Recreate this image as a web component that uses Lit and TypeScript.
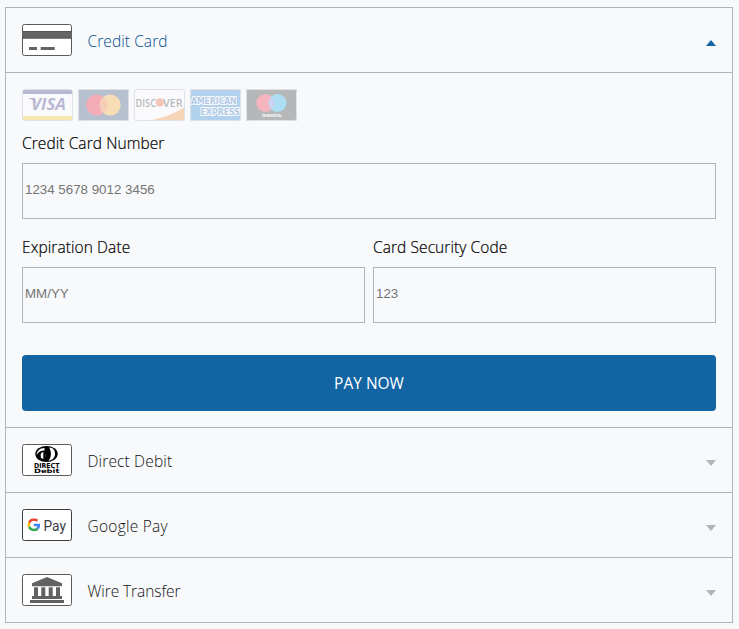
import { LitElement, html, css, svg } from "lit";
import { customElement, property } from "lit/decorators.js";
import { styleMap } from "lit/directives/style-map.js";

const frame = (stroke = "#5a5b5c", fill = "#fff") =>
  svg`<rect x=".5" y=".5" width="49" height="31" rx="2" fill=${fill} stroke=${stroke}/>`;

const creditIcon = html`<svg width="50" height="32" viewBox="0 0 50 32">
  ${frame()}
  <rect x="0" y="7" width="50" height="7.5" fill="#646464"/>
  <path d="M0 7.5H50M0 14H50" stroke="#555" stroke-width="1"/>
  <rect x="7" y="23" width="8" height="3" fill="#646464"/>
  <rect x="18.7" y="23" width="14" height="3" fill="#646464"/>
</svg>`;

const debitIcon = html`<svg width="50" height="32" viewBox="0 0 50 32">
  ${frame()}
  <ellipse cx="24.500" cy="10" rx="11.200" ry="8" fill="#000"/>
  <path d="M22.500 4C17.500 4 14.500 7.500 14.800 10.800C16.500 7.800 19 6.600 22.500 6.600Z" fill="#fff"/>
  <path d="M27 3.500C31.500 3.500 33.500 7 33 11C32 15 29.500 16.500 26.500 16.500C29.500 14 29.800 7 27 3.500Z" fill="#fff"/>
  <ellipse cx="21" cy="11.500" rx="2.300" ry="3.200" fill="#fff"/>
  <path d="M21.300 8.300h1.800v6.200H21.300Z" fill="#000"/>
  <text x="12" y="23.900" textLength="25.500" lengthAdjust="spacingAndGlyphs" font-size="6.800" class="heavy">DIRECT</text>
  <text x="12" y="29.200" textLength="25.500" lengthAdjust="spacingAndGlyphs" font-size="6" class="heavy">Debit</text>
</svg>`;

const googleIcon = html`<svg width="50" height="32" viewBox="0 0 50 32">
  ${frame("#3c4043")}
  <svg x="5.400" y="9.300" width="13" height="13" viewBox="0 0 48 48">
    <path fill="#ea4335" d="M24 9.500c3.540 0 6.710 1.220 9.210 3.600l6.850-6.850C35.900 2.380 30.470 0 24 0 14.620 0 6.510 5.380 2.560 13.220l7.980 6.190C12.430 13.720 17.740 9.500 24 9.500z"/>
    <path fill="#4285f4" d="M46.980 24.550c0-1.570-.15-3.090-.38-4.550H24v9.020h12.940c-.58 2.960-2.260 5.480-4.780 7.180l7.730 6c4.510-4.180 7.090-10.360 7.090-17.650z"/>
    <path fill="#fbbc05" d="M10.530 28.590c-.48-1.450-.76-2.990-.76-4.590s.27-3.140.76-4.590l-7.980-6.190C.92 16.460 0 20.120 0 24c0 3.880.92 7.540 2.560 10.780l7.970-6.190z"/>
    <path fill="#34a853" d="M24 48c6.480 0 11.930-2.130 15.890-5.810l-7.730-6c-2.150 1.450-4.920 2.300-8.160 2.300-6.260 0-11.570-4.220-13.470-9.910l-7.980 6.190C6.510 42.620 14.620 48 24 48z"/>
  </svg>
  <text x="21.500" y="21.500" textLength="22.500" lengthAdjust="spacingAndGlyphs" font-size="15.500" class="pay">Pay</text>
</svg>`;

const bankIcon = html`<svg width="50" height="32" viewBox="0 0 50 32">
  ${frame()}
  <g fill="#626262">
    <path d="M25 3L40 9.200V12.200H10V9.200Z"/>
    <path d="M12 13.300h4v9h-4ZM19.300 13.300h4v9h-4ZM26.700 13.300h4v9h-4ZM34 13.300h4v9h-4Z"/>
    <rect x="10" y="22" width="30" height="3"/>
    <rect x="8" y="26" width="34" height="3"/>
  </g>
</svg>`;

const brand = (content: unknown) => html`<svg width="51" height="32" viewBox="0 0 51 32">
  ${content}
  <rect x=".5" y=".5" width="50" height="31" rx="2" fill="none" stroke="#a9adb2"/>
</svg>`;

const brands = [
  brand(svg`<rect width="51" height="32" rx="2" fill="#fff"/>
    <rect x="1" y="1" width="49" height="4" fill="#27267d"/>
    <rect x="1" y="27" width="49" height="4" fill="#f7b900"/>
    <text x="9" y="20.800" textLength="35" lengthAdjust="spacingAndGlyphs" font-size="16.500" class="visa">VISA</text>
    <path d="M6.500 9H12.500L15.500 16C13.500 12.500 10.500 10.200 6.500 9.500Z" fill="#27267d"/>`),
  brand(svg`<rect width="51" height="32" rx="2" fill="#253e6c"/>
    <circle cx="18.700" cy="16" r="10.500" fill="#eb001b"/>
    <circle cx="32.200" cy="16" r="10.500" fill="#f79e1b"/>
    <path d="M25.450 8a10.500 10.500 0 0 1 0 16a10.500 10.500 0 0 1 0-16Z" fill="#f26a20"/>`),
  brand(svg`<rect width="51" height="32" rx="2" fill="#fff"/>
    <path d="M16 31.500C30 28.500 42 24 50.500 18V31.500Z" fill="#f48120"/>
    <text x="1.500" y="17.500" textLength="20.500" lengthAdjust="spacingAndGlyphs" font-size="10.500" class="discover">DISC</text>
    <circle cx="25.800" cy="13.500" r="4.200" fill="#e65b20"/>
    <text x="29" y="17.500" textLength="19.500" lengthAdjust="spacingAndGlyphs" font-size="10.500" class="discover">VER</text>`),
  brand(svg`<rect width="51" height="32" rx="2" fill="#1478ce"/>
    <text x="1" y="15" textLength="45.500" lengthAdjust="spacingAndGlyphs" font-size="9.500" class="amex">AMERICAN</text>
    <text x="10.500" y="25.500" textLength="39.500" lengthAdjust="spacingAndGlyphs" font-size="9.500" class="amex">EXPRESS</text>`),
  brand(svg`<rect width="51" height="32" rx="2" fill="#222"/>
    <circle cx="19.300" cy="14" r="9" fill="#eb1c34"/>
    <circle cx="31.500" cy="14" r="9" fill="#00a2e5"/>
    <path d="M25.400 7.400a9 9 0 0 1 0 13.200a9 9 0 0 1 0-13.200Z" fill="#7375cf"/>
    <text x="16" y="27.500" textLength="20.500" lengthAdjust="spacingAndGlyphs" font-size="6" class="maestro">maestro.</text>`),
];

@customElement("payment-method")
export class PaymentMethod extends LitElement {
  @property() label = "";
  @property({ type: Number }) tracking = 0;
  @property({ attribute: false }) icon: unknown;
  @property({ type: Boolean, reflect: true }) open = false;

  static styles = css`
    :host { display: block; border-bottom: 1px solid #b2b4b7; }
    .head { height: 64px; box-sizing: border-box; padding: 0 16px; display: flex; align-items: center; cursor: pointer; }
    svg { display: block; flex: none; }
    .label { margin-left: 15.500px; flex: 1; font-size: 15.500px; font-weight: 300; color: #111; padding-top: 2px; line-height: 22px; }
    :host([open]) .label { color: #00508f; }
    .arrow { width: 10px; height: 6px; margin-top: 6px; background: #b2b4b7; clip-path: polygon(0 0, 100% 0, 50% 100%); }
    :host([open]) .arrow { background: #1264a3; clip-path: polygon(50% 0, 100% 100%, 0 100%); }
    .heavy { font-family: "DejaVu Sans", sans-serif; font-weight: 700; fill: #000; }
    .pay { font-family: Roboto, sans-serif; fill: #3c4043; }
  `;

  render() {
    return html`<div class="head">${this.icon}<span class="label" style=${styleMap({ letterSpacing: `${this.tracking}px` })}>${this.label}</span><span class="arrow"></span></div>
      <slot></slot>`;
  }
}

@customElement("app-root")
export class AppRoot extends LitElement {
  static styles = css`
    :host { display: block; box-sizing: border-box; height: 629px; padding: 7px 6px 0 5px; background: #f8f9fb; font-family: "Open Sans", "Noto Sans", sans-serif; }
    .list { border: 1px solid #b2b4b7; border-bottom: 0; }
    .panel { border-top: 1px solid #b2b4b7; padding: 16px; height: 355px; box-sizing: border-box; display: flex; flex-direction: column; }
    .brands { display: flex; gap: 5px; height: 32px; opacity: 0.3; }
    .field { display: flex; flex-direction: column; flex: 1; min-width: 0; }
    .number { flex: none; margin-top: 10px; }
    .row { display: flex; gap: 8px; margin-top: 16px; }
    label { font-size: 15.500px; font-weight: 300; line-height: 24px; height: 32px; color: #000; letter-spacing: 0.080px; -webkit-text-stroke: 0.2px #000; }
    input { box-sizing: border-box; width: 100%; height: 56px; margin: 0; padding: 1px 2px 5px; border: 1px solid #b2b4b7; border-radius: 0; background: transparent; font: 13.333px "Liberation Sans", Arial, sans-serif; outline: none; }
    input::placeholder { color: #757575; opacity: 1; }
    button { flex: none; margin-top: 32px; height: 56px; border: 0; border-radius: 4px; background: #1264a3; color: #fff; font: 15.500px "Open Sans", sans-serif; padding: 0; }
    .visa { font-family: "Open Sans", sans-serif; font-weight: 700; font-style: italic; fill: #27267d; }
    .discover { font-family: "Open Sans", sans-serif; font-weight: 600; fill: #222; }
    .amex { font-family: "DejaVu Sans", sans-serif; font-weight: 700; fill: #0a62b8; stroke: #fff; stroke-width: 2px; paint-order: stroke; }
    .maestro { font-family: "Open Sans", sans-serif; font-weight: 700; fill: #fff; }
  `;

  render() {
    return html`<div class="list">
      <payment-method label="Credit Card" tracking="0.080" .icon=${creditIcon} open>
        <div class="panel">
          <div class="brands">${brands}</div>
          <div class="field number">
            <label for="number">Credit Card Number</label>
            <input id="number" placeholder="1234 5678 9012 3456">
          </div>
          <div class="row">
            <div class="field">
              <label for="expiry">Expiration Date</label>
              <input id="expiry" placeholder="MM/YY">
            </div>
            <div class="field">
              <label for="code">Card Security Code</label>
              <input id="code" placeholder="123">
            </div>
          </div>
          <button>PAY NOW</button>
        </div>
      </payment-method>
      <payment-method label="Direct Debit" tracking="0.150" .icon=${debitIcon}></payment-method>
      <payment-method label="Google Pay" tracking="0.250" .icon=${googleIcon}></payment-method>
      <payment-method label="Wire Transfer" tracking="-0.070" .icon=${bankIcon}></payment-method>
    </div>`;
  }
}
